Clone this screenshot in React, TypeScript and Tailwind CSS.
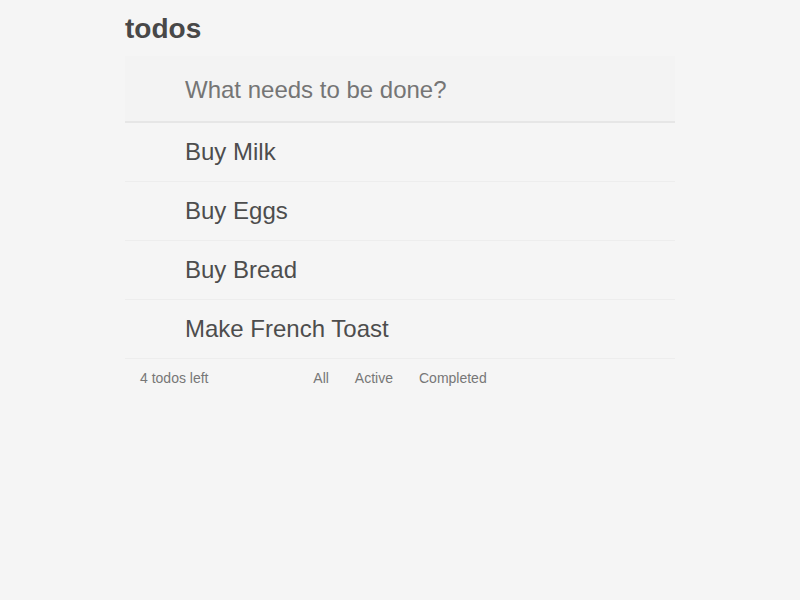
import React from "react";

const todos = ["Buy Milk", "Buy Eggs", "Buy Bread", "Make French Toast"];

const App = () => {
  return (
    <div className="min-h-screen w-full bg-[#f5f5f5] font-['Liberation_Sans',Arial,sans-serif] text-[#4d4d4d]">
      <div className="mx-auto w-[550px]">
        {/* Header */}
        <h1 className="h-[56px] flex items-center pt-[2px] text-[28px] font-bold text-[#484848] leading-none">
          todos
        </h1>
        <div className="h-[67px] bg-[#f3f3f3] border-b-2 border-[#e6e6e6] flex items-center pl-[60px] pt-[3px]">
          <span className="text-[24px] text-[#757575]">What needs to be done?</span>
        </div>

        {/* List */}
        <ul>
          {todos.map((t) => (
            <li
              key={t}
              className="h-[59px] border-b border-[#ededed] flex items-center pl-[60px] text-[24px] text-[#4d4d4d]"
            >
              {t}
            </li>
          ))}
        </ul>

        {/* Footer */}
        <div className="h-[38px] grid grid-cols-[1fr_auto_1fr] items-center px-[15px] text-[14px] text-[#777777]">
          <span>4 todos left</span>
          <div className="flex gap-[26px]">
            <span>All</span>
            <span>Active</span>
            <span>Completed</span>
          </div>
          <span></span>
        </div>
      </div>
    </div>
  );
};

export default App;
